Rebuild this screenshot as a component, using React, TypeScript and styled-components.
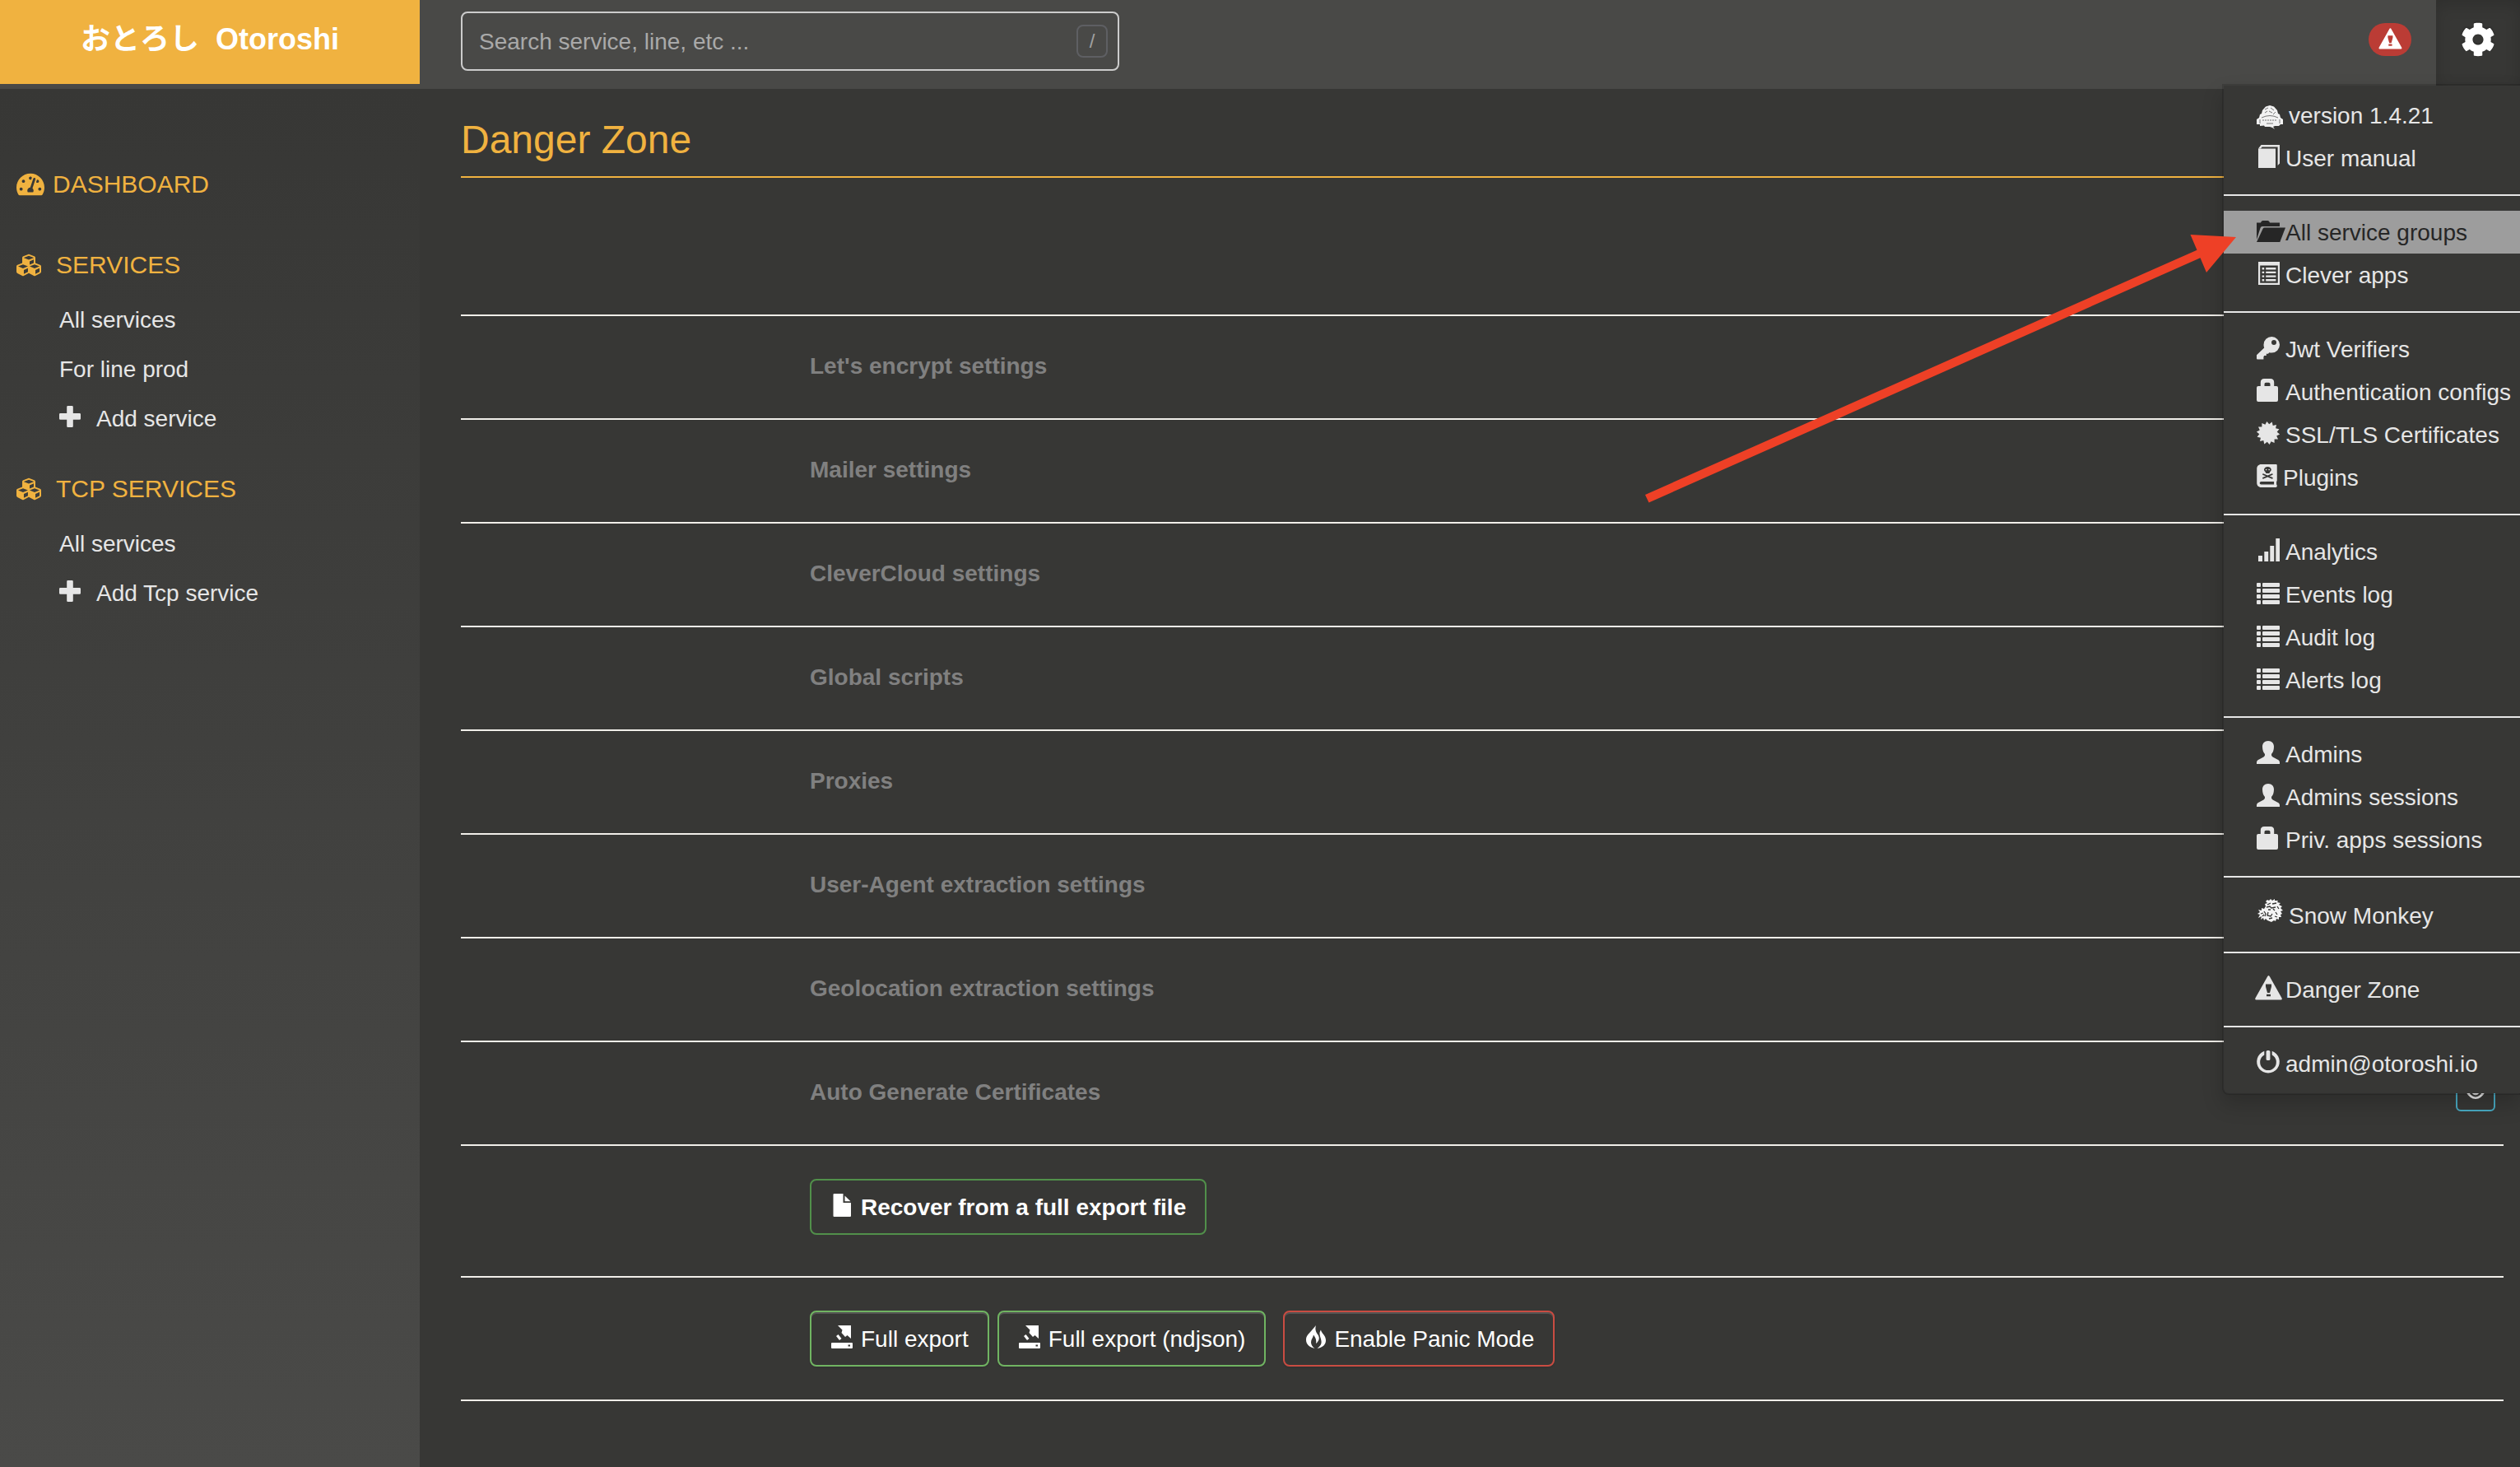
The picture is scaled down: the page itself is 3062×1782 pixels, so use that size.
import React from "react";
import styled, { createGlobalStyle } from "styled-components";
import { FaBookDead, FaCog, FaCubes, FaTachometerAlt } from "react-icons/fa";

const color = {
  page: "#373735",
  bar: "#494947",
  accent: "#f0b240",
  text: "#e6e6e6",
  rule: "#f0eee9",
  muted: "#808080",
};

const GlobalStyle = createGlobalStyle`
  * { box-sizing: border-box; }
  body {
    margin: 0;
    background: ${color.page};
    color: ${color.text};
    font: 28px/40px "Liberation Sans", Arial, "Noto Sans CJK JP", sans-serif;
  }
  a { color: inherit; text-decoration: none; }
  ul { list-style: none; margin: 0; padding: 0; }
`;

const Page = styled.div`
  position: relative;
  display: flex;
  flex-direction: column;
  min-height: 100vh;
`;

const TopBar = styled.header`
  position: relative;
  display: flex;
  align-items: flex-start;
  height: 108px;
  background: ${color.bar};
`;

const Brand = styled.a`
  display: flex;
  justify-content: center;
  gap: 20px;
  width: 510px;
  height: 102px;
  padding-top: 28px;
  background: ${color.accent};
  color: #fff;
  font-size: 36px;
  font-weight: 700;
`;

const SearchForm = styled.form`
  display: flex;
  align-items: center;
  width: 800px;
  height: 72px;
  margin: 14px auto 0 50px;
  padding: 0 12px 0 20px;
  border: 2px solid #cccccc;
  border-radius: 8px;
`;

const SearchInput = styled.input`
  flex: 1;
  min-width: 0;
  padding: 2px 0 0;
  border: 0;
  outline: 0;
  background: transparent;
  color: ${color.text};
  font: inherit;
  &::placeholder {
    color: #a9a9a9;
    opacity: 1;
  }
`;

const KeyHint = styled.kbd`
  display: flex;
  align-items: center;
  justify-content: center;
  width: 38px;
  height: 40px;
  border: 2px solid #5e5f63;
  border-radius: 8px;
  color: #a0a0a0;
  font: 24px/36px "Liberation Sans", Arial, sans-serif;
`;

const AlertBadge = styled.button`
  display: flex;
  align-items: center;
  justify-content: center;
  width: 52px;
  height: 40px;
  margin: 28px 30px 0 0;
  padding: 0 0 2px;
  border: 0;
  border-radius: 20px;
  background: #bb3c35;
  color: #fff;
`;

const SettingsButton = styled.button`
  display: flex;
  align-items: center;
  justify-content: center;
  width: 102px;
  height: 104px;
  padding: 0 0 8px;
  border: 0;
  background: ${color.page};
  box-shadow: inset 0 6px 18px rgba(0, 0, 0, 0.15);
  color: #fff;
  svg {
    filter: drop-shadow(0 -1px 1px rgba(0, 0, 0, 0.3));
  }
`;

const Menu = styled.nav`
  position: absolute;
  z-index: 2;
  top: 102px;
  right: 0;
  width: 362px;
  border: 2px solid rgba(0, 0, 0, 0.15);
  border-right: 0;
  border-radius: 0 0 0 8px;
  background: ${color.page};
  background-clip: padding-box;
  box-shadow: 0 12px 24px rgba(0, 0, 0, 0.18);
`;

const MenuGroup = styled.ul`
  padding: 18px 0;
  border-bottom: 2px solid ${color.text};
  &:first-child {
    padding-top: 10px;
  }
  &:last-child {
    padding-bottom: 10px;
    border-bottom: 0;
  }
`;

const MenuLink = styled.a<{ $active?: boolean; $tall?: boolean }>`
  display: flex;
  align-items: center;
  gap: 7px;
  padding: ${(p) => (p.$tall ? "9px" : "7px")} 0 5px 40px;
  background: ${(p) => (p.$active ? "#9d9d9d" : "transparent")};
  color: ${(p) => (p.$active ? "#262626" : color.text)};
  white-space: nowrap;
  > svg {
    flex: none;
  }
`;

const GlyphSvg = styled.svg`
  flex: none;
  display: block;
  overflow: visible;
  fill: currentColor;
`;

const RaisedGlyph = styled.span`
  display: flex;
  flex: none;
  padding-bottom: 6px;
`;

const PluginBook = styled(FaBookDead)`
  width: 25px;
  height: 28px;
`;

const Body = styled.div`
  display: flex;
  flex: 1;
`;

const Sidebar = styled.nav`
  width: 510px;
  padding: 96px 20px 0;
  background: linear-gradient(${color.page}, #4a4a48);
`;

const SideTitle = styled.h2<{ $gap: number; $space: number }>`
  display: flex;
  align-items: center;
  gap: ${(p) => p.$gap}px;
  margin: 0;
  padding-bottom: ${(p) => p.$space}px;
  color: ${color.accent};
  font-size: 30px;
  font-weight: 400;
  line-height: 40px;
`;

const SideList = styled.ul`
  padding: 0 0 36px 52px;
`;

const SideLink = styled.a`
  display: flex;
  align-items: center;
  gap: 17px;
  padding: 11px 0 9px;
`;

const Content = styled.main`
  flex: 1;
  min-width: 0;
  padding: 36px 20px 80px 50px;
`;

const Title = styled.h1`
  margin: 0;
  padding: 0 0 18px;
  border-bottom: 2px solid ${color.accent};
  color: ${color.accent};
  font-size: 48px;
  font-weight: 400;
  line-height: 52px;
`;

const Settings = styled.div`
  margin-top: 166px;
  border-top: 2px solid ${color.rule};
`;

const SettingRow = styled.section`
  display: flex;
  align-items: flex-end;
  justify-content: space-between;
  padding: 40px 10px 40px 424px;
  border-bottom: 2px solid ${color.rule};
`;

const SettingName = styled.h3`
  margin: 0;
  padding: 1px 0 3px;
  color: ${color.muted};
  font-size: 28px;
  font-weight: 700;
  line-height: 40px;
`;

const ToggleButton = styled.button`
  display: flex;
  align-items: center;
  justify-content: center;
  width: 48px;
  height: 44px;
  padding: 0 0 4px;
  border: 2px solid #48a9c2;
  border-radius: 6px;
  background: transparent;
  color: ${color.text};
`;

const ActionRow = styled.section<{ $bottom: number }>`
  display: flex;
  gap: 10px;
  padding: 40px 0 ${(p) => p.$bottom}px 424px;
  border-bottom: 2px solid ${color.rule};
`;

const tones = { file: "#51904a", success: "#70b462", danger: "#c94c42" };

const ActionButton = styled.button<{ $tone: keyof typeof tones }>`
  display: flex;
  align-items: center;
  gap: 8px;
  height: 68px;
  padding: 2px 23px 0 24px;
  border: 2px solid ${(p) => tones[p.$tone]};
  border-radius: 8px;
  background: transparent;
  box-shadow: ${(p) =>
    p.$tone === "file" ? "none" : "inset 0 2px 0 rgba(255, 255, 255, 0.15), 0 2px 2px rgba(0, 0, 0, 0.075)"};
  color: #fff;
  font: inherit;
  font-weight: ${(p) => (p.$tone === "file" ? 700 : 400)};
  white-space: nowrap;
`;

const DangerGroup = styled.div`
  padding-left: 11px;
`;

const Arrow = styled.svg`
  position: absolute;
  z-index: 3;
  top: 284px;
  right: 344px;
  width: 720px;
  height: 328px;
  pointer-events: none;
`;

const starPoints = Array.from({ length: 28 }, (_, i) => {
  const radius = i % 2 ? 10.8 : 14.2;
  const angle = (Math.PI * (i + 0.5)) / 14;
  return `${(14 + radius * Math.cos(angle)).toFixed(1)},${(14 + radius * Math.sin(angle)).toFixed(1)}`;
}).join(" ");

const listRows = [2, 9, 16, 23];

const glyphs = {
  book: (
    <>
      <path d="M2 28V4.5H23V28Z" />
      <path d="M2 4.5L5.5 0H28V22.5L25.6 25V2.4H6.6L5 4.5Z" />
    </>
  ),
  folder: (
    <>
      <path d="M0 25V4.5H5Q5.5 2 7.5 2H13.5Q15.5 2 16 4.5H28V9H7Q5 9 4.5 11Z" />
      <path d="M7.5 12Q8.2 10.6 9.8 10.6H35L28.3 28H0Z" />
    </>
  ),
  listAlt: (
    <>
      <path fillRule="evenodd" d="M2 0H28V28H2ZM4.2 4.6V25.8H25.8V4.6Z" />
      {[7, 11.7, 16.4, 21.1].map((y) => (
        <path key={y} d={`M6.6 ${y}h2.6v2.4H6.6ZM11.2 ${y}H23.4v2.4H11.2Z`} />
      ))}
    </>
  ),
  key: (
    <path
      fillRule="evenodd"
      d="M18.3 1A9.8 9.8 0 0 1 28 10.8A9.8 9.8 0 0 1 18.3 20.6Q16.5 20.6 15.3 20.2L14 21.7H11.8V24H9.2L8.4 25.4V28.6H1Q0 28.6 0 27.5V23.3L9.2 14.5Q8.5 12.8 8.5 10.8A9.8 9.8 0 0 1 18.3 1ZM21 5A3 3 0 1 0 21 11A3 3 0 1 0 21 5Z"
    />
  ),
  lock: (
    <path
      fillRule="evenodd"
      d="M4.8 9V4.5Q4.8 0 9.3 0H16.7Q21.2 0 21.2 4.5V9H24Q26 9 26 11V26Q26 28 24 28H2Q0 28 0 26V11Q0 9 2 9ZM9.5 9H16.5V6.5Q16.5 4.7 14.7 4.7H11.3Q9.5 4.7 9.5 6.5Z"
    />
  ),
  certificate: <polygon points={starPoints} />,
  signal: <path d="M2 21H7V28H2ZM9.3 16H14.2V28H9.3ZM16.3 9H21.2V28H16.3ZM23.3 0H28V28H23.3Z" />,
  list: (
    <>
      {listRows.map((y) => (
        <React.Fragment key={y}>
          <rect x="0" y={y} width="5" height="5" rx="1" />
          <rect x="7" y={y} width="21" height="5" rx="1" />
        </React.Fragment>
      ))}
    </>
  ),
  user: (
    <path d="M14 0C18.5 0 21 3 21 7C21 11.5 19.5 14.5 18 16Q17.5 18.5 19.500 19.600L26.500 23.300Q28 24.200 28 26V28H0V26Q0 24.200 1.500 23.300L8.500 19.600Q10.500 18.500 10 16C8.500 14.500 7 11.500 7 7C7 3 9.500 0 14 0Z" />
  ),
  warning: (
    <path
      fillRule="evenodd"
      d="M14.500 -1Q15.300 -1 16 .5L30.600 26.500Q31.400 28.500 29.800 28.500H-.8Q-2.400 28.500 -1.600 26.500L13 .5Q13.700 -1 14.500 -1ZM11 9.500V12.500L13 20H16L18 12.500V9.500ZM12 21.700V24.300H17V21.700Z"
    />
  ),
  power: (
    <>
      <path d="M9.300 .8V5.500A9.900 9.900 0 1 0 18.700 5.500V.8A13.800 13.800 0 1 1 9.300 .8Z" />
      <rect x="11.600" y="0" width="4.800" height="12" rx="1.600" />
    </>
  ),
  plus: (
    <path d="M10.500 1H15.500Q16.800 1 16.800 2.300V10H24.700Q26 10 26 11.300V16.500Q26 17.800 24.700 17.800H16.800V25.700Q16.800 27 15.500 27H10.500Q9.200 27 9.200 25.700V17.800H1.300Q0 17.800 0 16.500V11.300Q0 10 1.300 10H9.200V2.300Q9.200 1 10.500 1Z" />
  ),
  file: (
    <>
      <path d="M3.500 0H14.500V11H24V27Q24 28 23 28H3.500Q2.500 28 2.500 27V1Q2.500 0 3.500 0Z" />
      <path d="M16.500 2.500L23.500 9.300H16.500Z" />
    </>
  ),
  exporter: (
    <>
      <path fillRule="evenodd" d="M1 21H25Q26 21 26 22V27Q26 28 25 28H1Q0 28 0 27V22Q0 21 1 21ZM20.500 23.500V25.500H23V23.500Z" />
      <path d="M8 0H24V16L19.500 12L17 14L12.500 9L13.500 5.500Z" />
      <path d="M8.500 11L12.500 16L10 18L6 13Z" />
    </>
  ),
  fire: (
    <>
      <path d="M14 0C12.500 5 14 8 16.500 11.500C18.500 14.500 18.500 18.500 14 22C15 18 13.500 15 11 11.500C10.500 15 8 17 8 20.500C8 23.500 10 26 12.500 28C6 26.500 2 23 2 17.500C2 12.500 5 10.500 8 7C10 4.500 12 2.500 14 0Z" />
      <path d="M20 5.500C20.500 9.500 26 12 26 18C26 23.500 22 27 15.500 28C19 25.500 21 23 20.500 19C20.200 16 18.500 13 18.500 10C18.500 8 19.300 6.500 20 5.500Z" />
    </>
  ),
  eye: (
    <path
      fillRule="evenodd"
      d="M0 14Q6 4 14 4Q22 4 28 14Q22 24.500 14 24.500Q6 24.500 0 14ZM4 14Q8.500 21.500 14 21.500Q19.500 21.500 24 14Q19.500 8 14 8Q8.500 8 4 14ZM14 8A5.500 5.500 0 1 1 14 19A5.500 5.500 0 1 1 14 8Z"
    />
  ),
};

type GlyphName = keyof typeof glyphs;

const Glyph = ({ name, size = 28 }: { name: GlyphName; size?: number }) => (
  <GlyphSvg width={size} height={size} viewBox="0 0 28 28" aria-hidden="true">
    {glyphs[name]}
  </GlyphSvg>
);

const Raised = ({ name }: { name: GlyphName }) => (
  <RaisedGlyph>
    <Glyph name={name} />
  </RaisedGlyph>
);

const OtoroshiMark = () => (
  <GlyphSvg width="32" height="40" viewBox="0 1 32 40" aria-hidden="true">
    <path
      fill="#f2f2f2"
      d="M16 8L21 9.500L25 14L26 18L28 19L29 23L32 25V31L29 31L27 33L22 33L20 34L22 37L19 35L16 34L10 34L9 32.500L4 33L4 31L0 31V25L3 23L4 19L6 18L7 14L11 9.500Z"
    />
    <path
      fill="none"
      stroke="#777"
      strokeWidth="1"
      d="M10 13L14 11M17 11L21 14M10 17L13 15M15 15L19 17M20 19L23 16M6 23Q16 18 26 23M7 26H9M10 26H12M13 26H15M16 26H18M19 26H21M22 26H24M12 30H20M4 25V30M28 25V30"
    />
  </GlyphSvg>
);

const SnowMonkeyMark = () => (
  <GlyphSvg width="32" height="40" viewBox="0 1 32 40" aria-hidden="true">
    <path
      fill="#f4f4f4"
      d="M13 1L15 2L17 0L19 2L22 0L22 2L26 2L25 4L29 5L27 7L31 9L29 11L32 14L29 15L31 18L29 19L30 22L27 22L27 25L24 24L23 27L21 26L18 28L13 26L11 24L9 26L8 23L5 25L6 21L2 23L4 19L1 18L4 16L2 13L6 14L6 11L9 12L11 9L10 6L13 5L11 3Z"
    />
    <path
      fill="none"
      stroke="#373735"
      strokeWidth="1.300"
      d="M13 7L17 5M19 6L24 5M12 10L16 9L18 11L23 10M14 13H17M20 12L22 14M9 15L11 18L10 21M14 16L13 20L17 21L19 18M15 24L19 23M23 16L25 19M22 21L25 22M25 9L27 12M5 18L8 17M7 21L9 19"
    />
  </GlyphSvg>
);

const menu: { label: string; icon: React.ReactNode; active?: boolean; tall?: boolean }[][] = [
  [
    { label: "version 1.4.21", icon: <OtoroshiMark /> },
    { label: "User manual", icon: <Raised name="book" /> },
  ],
  [
    { label: "All service groups", icon: <Raised name="folder" />, active: true },
    { label: "Clever apps", icon: <Raised name="listAlt" /> },
  ],
  [
    { label: "Jwt Verifiers", icon: <Raised name="key" /> },
    { label: "Authentication configs", icon: <Raised name="lock" /> },
    { label: "SSL/TLS Certificates", icon: <Raised name="certificate" /> },
    { label: "Plugins", icon: <RaisedGlyph><PluginBook /></RaisedGlyph> },
  ],
  [
    { label: "Analytics", icon: <Raised name="signal" /> },
    { label: "Events log", icon: <Raised name="list" /> },
    { label: "Audit log", icon: <Raised name="list" /> },
    { label: "Alerts log", icon: <Raised name="list" /> },
  ],
  [
    { label: "Admins", icon: <Raised name="user" /> },
    { label: "Admins sessions", icon: <Raised name="user" /> },
    { label: "Priv. apps sessions", icon: <Raised name="lock" /> },
  ],
  [{ label: "Snow Monkey", icon: <SnowMonkeyMark />, tall: true }],
  [{ label: "Danger Zone", icon: <Raised name="warning" /> }],
  [{ label: "admin@otoroshi.io", icon: <Raised name="power" /> }],
];

const settings = [
  "Let's encrypt settings",
  "Mailer settings",
  "CleverCloud settings",
  "Global scripts",
  "Proxies",
  "User-Agent extraction settings",
  "Geolocation extraction settings",
  "Auto Generate Certificates",
];

export default function App() {
  return (
    <Page>
      <GlobalStyle />
      <TopBar>
        <Brand href="#">
          <span>おとろし</span>
          <span>Otoroshi</span>
        </Brand>
        <SearchForm>
          <SearchInput type="text" aria-label="Search" placeholder="Search service, line, etc ..." />
          <KeyHint>/</KeyHint>
        </SearchForm>
        <AlertBadge type="button" aria-label="Alerts">
          <Glyph name="warning" size={24} />
        </AlertBadge>
        <SettingsButton type="button" aria-label="Settings">
          <FaCog size={42} />
        </SettingsButton>
        <Menu>
          {menu.map((group) => (
            <MenuGroup key={group[0].label}>
              {group.map((item) => (
                <li key={item.label}>
                  <MenuLink href="#" $active={item.active} $tall={item.tall}>
                    {item.icon}
                    {item.label}
                  </MenuLink>
                </li>
              ))}
            </MenuGroup>
          ))}
        </Menu>
      </TopBar>
      <Body>
        <Sidebar>
          <SideTitle $gap={10} $space={58}>
            <FaTachometerAlt size={34} />
            <a href="#">DASHBOARD</a>
          </SideTitle>
          <SideTitle $gap={18} $space={16}>
            <FaCubes size={30} />
            SERVICES
          </SideTitle>
          <SideList>
            <li><SideLink href="#">All services</SideLink></li>
            <li><SideLink href="#">For line prod</SideLink></li>
            <li><SideLink href="#"><Raised name="plus" />Add service</SideLink></li>
          </SideList>
          <SideTitle $gap={18} $space={16}>
            <FaCubes size={30} />
            TCP SERVICES
          </SideTitle>
          <SideList>
            <li><SideLink href="#">All services</SideLink></li>
            <li><SideLink href="#"><Raised name="plus" />Add Tcp service</SideLink></li>
          </SideList>
        </Sidebar>
        <Content>
          <Title>Danger Zone</Title>
          <Settings>
            {settings.map((name, i) => (
              <SettingRow key={name}>
                <SettingName>{name}</SettingName>
                {i === settings.length - 1 && (
                  <ToggleButton type="button" aria-label={name}>
                    <Glyph name="eye" size={24} />
                  </ToggleButton>
                )}
              </SettingRow>
            ))}
            <ActionRow $bottom={50}>
              <ActionButton type="button" $tone="file">
                <Raised name="file" />
                Recover from a full export file
              </ActionButton>
            </ActionRow>
            <ActionRow $bottom={40}>
              <ActionButton type="button" $tone="success">
                <Raised name="exporter" />
                Full export
              </ActionButton>
              <ActionButton type="button" $tone="success">
                <Raised name="exporter" />
                Full export (ndjson)
              </ActionButton>
              <DangerGroup>
                <ActionButton type="button" $tone="danger">
                  <Raised name="fire" />
                  Enable Panic Mode
                </ActionButton>
              </DangerGroup>
            </ActionRow>
          </Settings>
        </Content>
      </Body>
      <Arrow viewBox="0 0 720 328" aria-hidden="true">
        <path fill="#ee4026" d="M1 317L671.500 19.700L663.500 1L719 4L683 47L675.500 29.300L5.500 326.500Z" />
      </Arrow>
    </Page>
  );
}
